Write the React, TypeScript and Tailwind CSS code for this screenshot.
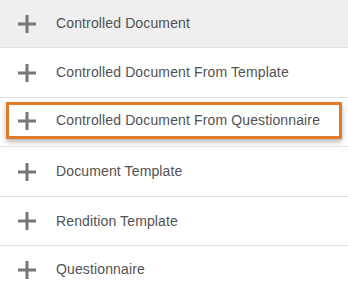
import React from 'react';

const Plus = () => (
  <svg width="18" height="18" viewBox="0 0 18 18" className="shrink-0">
    <rect x="0" y="7.5" width="18" height="3" fill="#767676" />
    <rect x="7.5" y="0" width="3" height="18" fill="#767676" />
  </svg>
);

const rows = [
  { label: 'Controlled Document', h: 'h-[48px]', bg: 'bg-[#efefef]' },
  { label: 'Controlled Document From Template', h: 'h-[50px]', bg: 'bg-white' },
  { label: 'Controlled Document From Questionnaire', h: 'h-[49px]', bg: 'bg-white', active: true },
  { label: 'Document Template', h: 'h-[50px]', bg: 'bg-white' },
  { label: 'Rendition Template', h: 'h-[49px]', bg: 'bg-white' },
  { label: 'Questionnaire', h: 'h-[47px]', bg: 'bg-white', last: true },
];

export default function App() {
  return (
    <div className="w-[348px] h-[293px] bg-white overflow-hidden font-['Liberation_Sans',Arial,sans-serif] text-[14px] tracking-[0.13px] text-[#525252]">
      {rows.map((r) =>
        r.active ? (
          <div key={r.label} className={`${r.h} ${r.bg} border-b border-[#e2e2e2] pl-[6px] pr-[6px] pt-[4px] pb-[8px]`}>
            <div className="h-[37px] flex items-center gap-[20px] pl-[9px] border-[3px] border-[#e07b2c] bg-white shadow-[0_3px_5px_rgba(0,0,0,0.28)]">
              <Plus />
              <span>{r.label}</span>
            </div>
          </div>
        ) : (
          <div
            key={r.label}
            className={`${r.h} ${r.bg} ${r.last ? '' : 'border-b border-[#e2e2e2]'} flex items-center gap-[20px] pl-[18px]`}
          >
            <Plus />
            <span>{r.label}</span>
          </div>
        )
      )}
    </div>
  );
}
